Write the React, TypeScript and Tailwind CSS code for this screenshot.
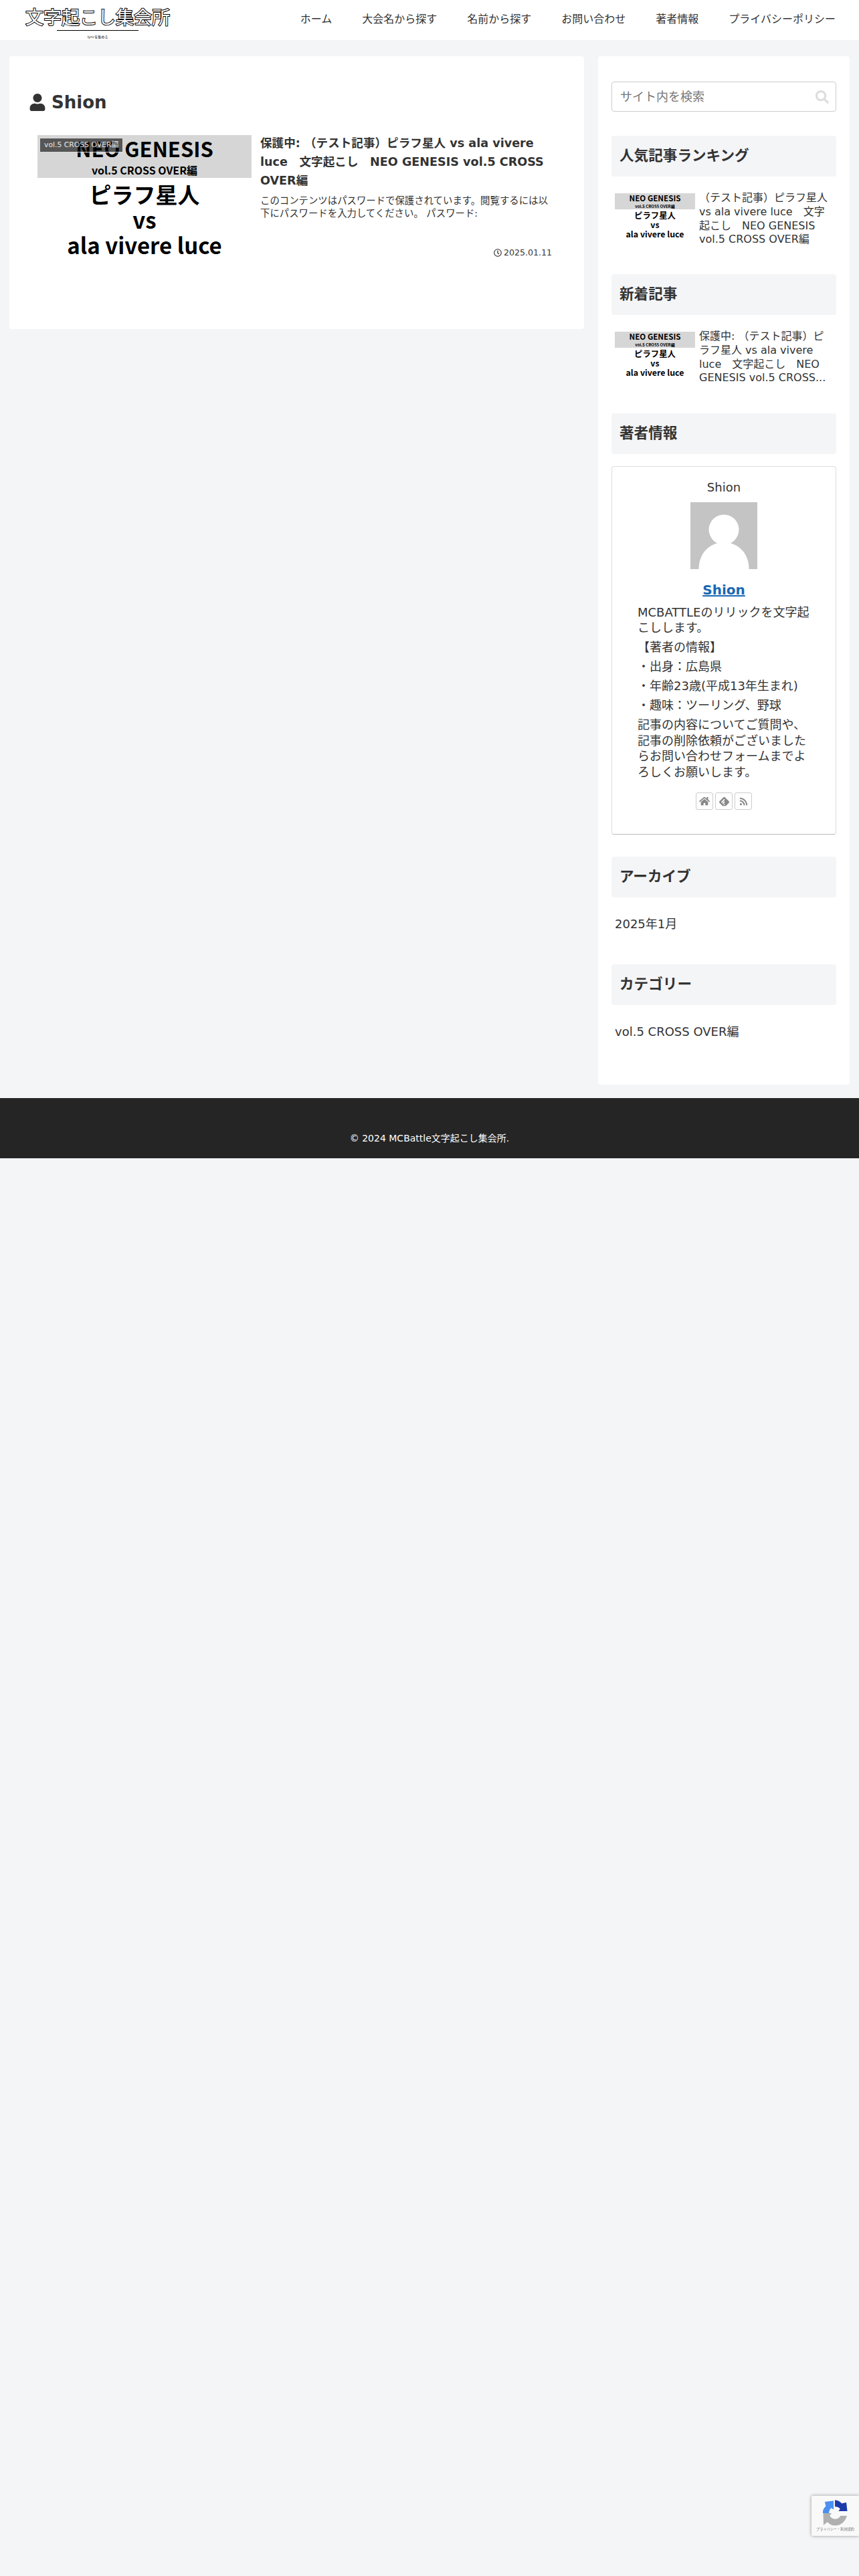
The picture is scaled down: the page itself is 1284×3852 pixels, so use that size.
import React from 'react';
import { FaHome, FaUser, FaSearch, FaRss, FaRegClock } from 'react-icons/fa';
import { SiFeedly } from 'react-icons/si';

const navItems = ['ホーム', '大会名から探す', '名前から探す', 'お問い合わせ', '著者情報', 'プライバシーポリシー'];

const WidgetTitle = ({ children }: { children: React.ReactNode }) => (
  <h3 className="h-[61px] flex items-center px-[12px] bg-[#f4f5f7] rounded-[4px] text-[21.6px] font-bold text-[#333]">
    {children}
  </h3>
);

const SmallThumb = () => (
  <div className="w-[120px] h-[68px] shrink-0 flex flex-col items-center text-black font-bold font-['Noto_Sans_CJK_JP',sans-serif]">
    <div className="w-full h-[24px] bg-[#d6d6d6] flex flex-col items-center">
      <span className="text-[11.6px] leading-[15px]">NEO GENESIS</span>
      <span className="text-[6px] leading-[9px]">vol.5 CROSS OVER編</span>
    </div>
    <span className="text-[12.4px] leading-[14px] mt-[2px]">ピラフ星人</span>
    <span className="text-[12.4px] leading-[14px]">vs</span>
    <span className="text-[12.4px] leading-[14px]">ala vivere luce</span>
  </div>
);

const App: React.FC = () => {
  return (
    <div className="min-h-[3852px] bg-[#f4f5f7] text-[#333] relative font-['DejaVu_Sans','Noto_Sans_CJK_JP',sans-serif]">
      {/* Header */}
      <header className="h-[60px] bg-white flex items-start justify-between pl-[38px] pr-[35px]">
        <div className="flex flex-col items-center w-[216px]">
          <div className="text-[27px] leading-[30px] text-white font-['Noto_Sans_CJK_JP',sans-serif] [-webkit-text-stroke:2px_#000] [paint-order:stroke_fill] mt-[10px] whitespace-nowrap">文字起こし集会所</div>
          <div className="w-[122px] h-px bg-black mt-[5px]"></div>
          <div className="text-[5px] leading-[8px] text-black mt-[5px]">lyricを集める</div>
        </div>
        <nav className="flex gap-[45px] text-[16px] leading-[24px] text-[#333] mt-[17px]">
          {navItems.map((item) => (
            <a key={item}>{item}</a>
          ))}
        </nav>
      </header>

      <div className="flex items-start gap-[21px] pl-[14px] pr-[14px] pt-[24px]">
        {/* Main */}
        <main className="w-[859px] h-[408px] bg-white rounded-[4px] pt-[51px] px-[30px]">
          <h1 className="flex items-center gap-[8px] text-[26px] leading-[36px] font-bold text-[#333]">
            <FaUser size={26} className="-ml-[1px]" />
            Shion
          </h1>
          <div className="flex gap-[13px] mt-[31px] ml-[12px]">
            <div className="relative w-[320px] h-[180px] shrink-0 flex flex-col items-center text-black font-bold font-['Noto_Sans_CJK_JP',sans-serif]">
              <div className="w-full h-[64px] bg-[#d6d6d6] flex flex-col items-center">
                <span className="text-[31px] leading-[40px]">NEO GENESIS</span>
                <span className="text-[16px] leading-[24px]">vol.5 CROSS OVER編</span>
              </div>
              <span className="text-[33px] leading-[38px] mt-[5px]">ピラフ星人</span>
              <span className="text-[33px] leading-[38px]">vs</span>
              <span className="text-[33px] leading-[38px]">ala vivere luce</span>
              <span className="absolute top-[4px] left-[3px] px-[6px] h-[22px] flex items-center bg-black/60 border border-white/80 text-white/85 text-[10.8px] font-normal font-['DejaVu_Sans','Noto_Sans_CJK_JP',sans-serif]">vol.5 CROSS OVER編</span>
            </div>
            <div className="w-[436px] -mt-[2px]">
              <h2 className="text-[17.6px] leading-[28px] font-bold text-[#333]">保護中: （テスト記事）ピラフ星人 vs ala vivere luce　文字起こし　NEO GENESIS vol.5 CROSS OVER編</h2>
              <p className="text-[14.4px] leading-[19px] mt-[7px] text-[#333]">このコンテンツはパスワードで保護されています。閲覧するには以下にパスワードを入力してください。 パスワード:</p>
              <div className="flex items-center justify-end gap-[3px] mt-[40px] text-[12.6px] leading-[18px]">
                <FaRegClock size={12} />
                2025.01.11
              </div>
            </div>
          </div>
        </main>

        {/* Sidebar */}
        <aside className="w-[376px] h-[1538px] bg-white rounded-[4px] pt-[38px] px-[20px]">
          <div className="h-[45px] border border-[#ccc] rounded-[4px] flex items-center justify-between pl-[12px] pr-[10px] text-[18px] text-[#777]">
            サイト内を検索
            <FaSearch size={20} className="text-[#ddd]" />
          </div>

          <div className="mt-[36px]">
            <WidgetTitle>人気記事ランキング</WidgetTitle>
          </div>
          <div className="flex gap-[6px] mt-[25px] pl-[5px] text-[16px] leading-[20.8px] h-[121px] text-[#333]">
            <SmallThumb />
            <p className="w-[195px] -mt-[3px]">（テスト記事）ピラフ星人 vs ala vivere luce　文字起こし　NEO GENESIS vol.5 CROSS OVER編</p>
          </div>
          <WidgetTitle>新着記事</WidgetTitle>
          <div className="flex gap-[6px] mt-[25px] pl-[5px] text-[16px] leading-[20.8px] h-[122px] text-[#333]">
            <SmallThumb />
            <p className="w-[195px] -mt-[3px]">保護中: （テスト記事）ピラフ星人 vs ala vivere luce　文字起こし　NEO GENESIS vol.5 CROSS...</p>
          </div>

          <WidgetTitle>著者情報</WidgetTitle>
          <div className="mt-[18px] h-[551px] border border-[#ddd] border-b-[#bbb] rounded-[4px] flex flex-col items-center pt-[19px]">
            <div className="text-[18px] leading-[24px]">Shion</div>
            <svg className="mt-[10px]" width="100" height="100" viewBox="0 0 100 100">
              <rect width="100" height="100" fill="#c4c4c4" />
              <circle cx="50" cy="41" r="22.5" fill="#fff" />
              <path d="M12.5 100 C12.5 75 30 60 50 60 C70 60 87.5 75 87.5 100 Z" fill="#fff" />
            </svg>
            <a className="mt-[17px] text-[20px] leading-[28px] font-bold text-[#1967b3] underline">Shion</a>
            <div className="w-[258px] mt-[8px] text-[18px] leading-[23.4px]">
              <p>MCBATTLEのリリックを文字起こしします。</p>
              <p className="mt-[5.6px]">【著者の情報】</p>
              <p className="mt-[5.6px]">・出身：広島県</p>
              <p className="mt-[5.6px]">・年齢23歳(平成13年生まれ)</p>
              <p className="mt-[5.6px]">・趣味：ツーリング、野球</p>
              <p className="mt-[5.6px]">記事の内容についてご質問や、記事の削除依頼がございましたらお問い合わせフォームまでよろしくお願いします。</p>
            </div>
            <div className="flex gap-[3px] mt-[19px] text-[#888]">
              <div className="w-[26px] h-[26px] border border-[#ccc] rounded-[3px] flex items-center justify-center"><FaHome size={16} /></div>
              <div className="w-[26px] h-[26px] border border-[#ccc] rounded-[3px] flex items-center justify-center"><SiFeedly size={15} /></div>
              <div className="w-[26px] h-[26px] border border-[#ccc] rounded-[3px] flex items-center justify-center"><FaRss size={13} /></div>
            </div>
          </div>

          <div className="mt-[33px]">
            <WidgetTitle>アーカイブ</WidgetTitle>
          </div>
          <p className="mt-[28px] pl-[5px] text-[18px] leading-[24px] h-[72px]">2025年1月</p>
          <WidgetTitle>カテゴリー</WidgetTitle>
          <p className="mt-[28px] pl-[5px] text-[18px] leading-[24px]">vol.5 CROSS OVER編</p>
        </aside>
      </div>

      {/* Footer */}
      <footer className="mt-[20px] h-[90px] bg-[#252525] flex items-end justify-center pb-[21px] text-white text-[14px] leading-[18px]">
        © 2024 MCBattle文字起こし集会所.
      </footer>

      {/* reCAPTCHA badge */}
      <div className="fixed right-0 top-[3732px] w-[71px] h-[60px] bg-[#f9f9f9] rounded-l-[2px] shadow-[0_0_5px_rgba(0,0,0,0.4)] flex flex-col items-center overflow-hidden">
        <svg className="mt-[6px]" width="37" height="39" viewBox="0 0 38 39">
          <path d="M18.5 0 C22 0 26 1.5 29 5 L36 3.5 L37.5 17 L24 17 L26.5 13.5 C24.5 11 22 10 18.5 10 Z" fill="#1c3aa9" />
          <path d="M0 20 C-.5 16.5 1 12.5 4.5 9.5 L3 2.5 L16.5 1 L16.5 14.5 L13 12 C10.5 14 9.5 16.5 9.5 20 Z" fill="#4a90f0" />
          <path d="M0.5 20 L13.5 20 L10.5 24 C12.5 27 15.5 29 19 29 C22.5 29 25.5 27 27 24 L37 24 C35 32 28 39 19 39 C14 39 10 37 7 33.5 L1 38.5 Z" fill="#b0b0b0" />
        </svg>
        <div className="text-[5.2px] leading-[10px] text-[#777] whitespace-nowrap">プライバシー・利用規約</div>
      </div>
    </div>
  );
};

export default App;
